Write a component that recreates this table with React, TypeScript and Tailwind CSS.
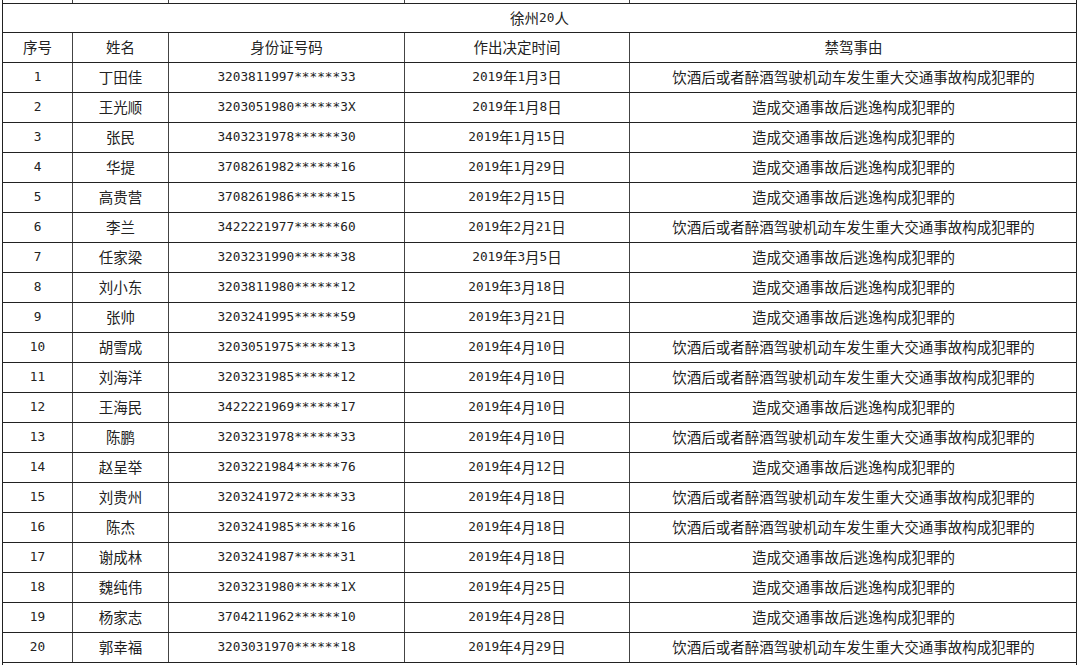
const rows: [string, string, string, string, string][] = [
  ["1", "丁田佳", "3203811997******33", "2019年1月3日", "饮酒后或者醉酒驾驶机动车发生重大交通事故构成犯罪的"],
  ["2", "王光顺", "3203051980******3X", "2019年1月8日", "造成交通事故后逃逸构成犯罪的"],
  ["3", "张民", "3403231978******30", "2019年1月15日", "造成交通事故后逃逸构成犯罪的"],
  ["4", "华提", "3708261982******16", "2019年1月29日", "造成交通事故后逃逸构成犯罪的"],
  ["5", "高贵营", "3708261986******15", "2019年2月15日", "造成交通事故后逃逸构成犯罪的"],
  ["6", "李兰", "3422221977******60", "2019年2月21日", "饮酒后或者醉酒驾驶机动车发生重大交通事故构成犯罪的"],
  ["7", "任家梁", "3203231990******38", "2019年3月5日", "造成交通事故后逃逸构成犯罪的"],
  ["8", "刘小东", "3203811980******12", "2019年3月18日", "造成交通事故后逃逸构成犯罪的"],
  ["9", "张帅", "3203241995******59", "2019年3月21日", "造成交通事故后逃逸构成犯罪的"],
  ["10", "胡雪成", "3203051975******13", "2019年4月10日", "饮酒后或者醉酒驾驶机动车发生重大交通事故构成犯罪的"],
  ["11", "刘海洋", "3203231985******12", "2019年4月10日", "饮酒后或者醉酒驾驶机动车发生重大交通事故构成犯罪的"],
  ["12", "王海民", "3422221969******17", "2019年4月10日", "造成交通事故后逃逸构成犯罪的"],
  ["13", "陈鹏", "3203231978******33", "2019年4月10日", "饮酒后或者醉酒驾驶机动车发生重大交通事故构成犯罪的"],
  ["14", "赵呈举", "3203221984******76", "2019年4月12日", "造成交通事故后逃逸构成犯罪的"],
  ["15", "刘贵州", "3203241972******33", "2019年4月18日", "饮酒后或者醉酒驾驶机动车发生重大交通事故构成犯罪的"],
  ["16", "陈杰", "3203241985******16", "2019年4月18日", "饮酒后或者醉酒驾驶机动车发生重大交通事故构成犯罪的"],
  ["17", "谢成林", "3203241987******31", "2019年4月18日", "造成交通事故后逃逸构成犯罪的"],
  ["18", "魏纯伟", "3203231980******1X", "2019年4月25日", "造成交通事故后逃逸构成犯罪的"],
  ["19", "杨家志", "3704211962******10", "2019年4月28日", "造成交通事故后逃逸构成犯罪的"],
  ["20", "郭幸福", "3203031970******18", "2019年4月29日", "饮酒后或者醉酒驾驶机动车发生重大交通事故构成犯罪的"],
];

const header = ["序号", "姓名", "身份证号码", "作出决定时间", "禁驾事由"];

// half-width runs get a narrower mono face, like the original 宋体 digits
const Txt = ({ s }: { s: string }) => (
  <>
    {s
      .split(/([\x00-\x7f]+)/)
      .filter(Boolean)
      .map((p, i) =>
        /^[\x00-\x7f]+$/.test(p) ? (
          <span key={i} className="font-['DejaVu_Sans_Mono',monospace] text-[12.75px]">
            {p}
          </span>
        ) : (
          <span key={i}>{p}</span>
        )
      )}
  </>
);

const cols = "grid grid-cols-[70px_96px_236px_225px_447px]";
const cell = "flex items-center justify-center border-r border-[#444] last:border-r-0";

export default function App() {
  return (
    <div className="w-[1080px] h-[665px] bg-white overflow-hidden pl-[2px] font-['Noto_Sans_CJK_SC',sans-serif] text-[14.5px] text-[#222] leading-none">
      <div className="w-[1075px] h-[665px] border-x border-[#222] flex flex-col">
        {/* tail of the previous block */}
        <div className={`${cols} h-[4px] border-b border-[#222] box-border`}>
          <div className={cell} />
          <div className={cell} />
          <div className={cell} />
          <div className={cell} />
          <div className={cell} />
        </div>
        <div className="h-[29px] border-b border-[#222] flex items-center justify-center">
          <Txt s="徐州20人" />
        </div>
        <div className={`${cols} h-[30px] border-b border-[#222]`}>
          {header.map((h) => (
            <div key={h} className={cell}>
              {h}
            </div>
          ))}
        </div>
        {rows.map((r) => (
          <div key={r[0]} className={`${cols} h-[30px] border-b border-[#222] shrink-0`}>
            {r.map((v, i) => (
              <div key={i} className={cell}>
                <Txt s={v} />
              </div>
            ))}
          </div>
        ))}
      </div>
    </div>
  );
}
